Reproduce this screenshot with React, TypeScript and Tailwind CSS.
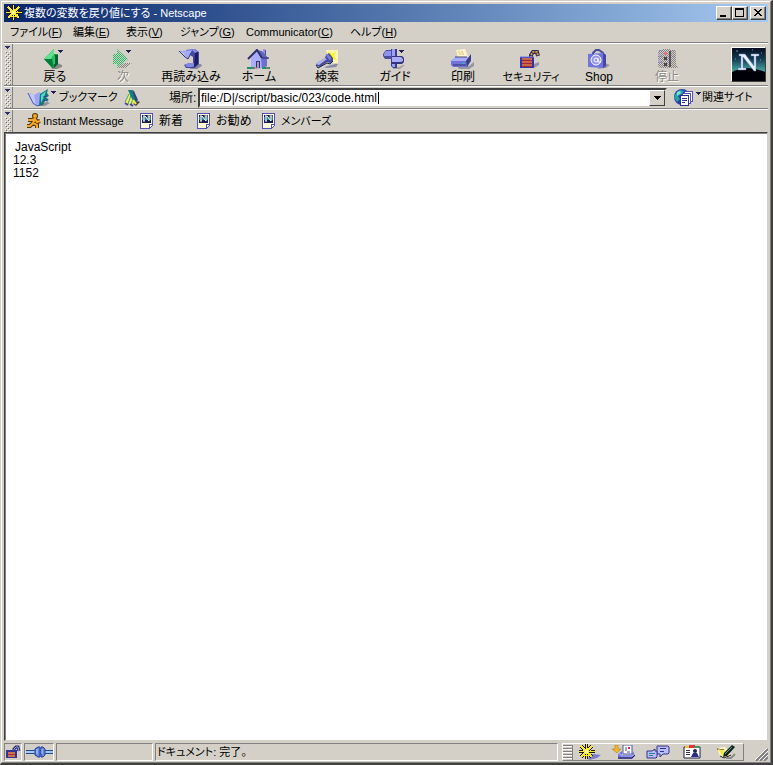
import type { ReactNode } from "react";
import clsx from "clsx";

const sunken = "border border-t-[#808080] border-l-[#808080] border-r-white border-b-white";

function Svg({ w, h, children }: { w: number; h: number; children: ReactNode }) {
  return (
    <svg aria-hidden width={w} height={h} viewBox={`0 0 ${w} ${h}`} className="block shrink-0">
      {children}
    </svg>
  );
}

function Menu3({ x, y }: { x: number; y: number }) {
  return <path d={`M${x} ${y}h5v1h-1v1h-1v1h-1v-1h-1v-1h-1z`} fill="#20204c" shapeRendering="crispEdges" />;
}

/* ── Toolbar icons, 28 × 20 ── */

function BackIcon() {
  return (
    <Svg w={28} h={20}>
      <path d="M10 17l6-3 5 2v2l-5 2h-5z" fill="#8c8a88" />
      <path d="M3 10L13 0v5h4v10l-4 4h-2z" fill="#12a048" />
      <path d="M3 10L13 0v6l-3 4z" fill="#5ee08c" />
      <path d="M3 10h8l1 9z" fill="#087838" />
      <path d="M14 6h3v9l-4 4z" fill="#0a5c38" />
      <path d="M11 7h3v8h-2z" fill="#24c460" />
      <Menu3 x={17} y={1} />
    </Svg>
  );
}

function ForwardIcon() {
  return (
    <Svg w={28} h={20}>
      <defs>
        <pattern id="dither-green" width="2" height="2" patternUnits="userSpaceOnUse">
          <path d="M0 0h1v1H0zM1 1h1v1H1z" fill="#3cac6c" />
          <path d="M1 0h1v1H1z" fill="#b0ecbc" />
        </pattern>
        <pattern id="dither-gray" width="2" height="2" patternUnits="userSpaceOnUse">
          <path d="M0 0h1v1H0zM1 1h1v1H1z" fill="#858382" />
        </pattern>
      </defs>
      <path d="M9 19l6-5h8l-7 5z" fill="url(#dither-gray)" />
      <path d="M4 5h4V0l11 10-11 9v-4H4z" fill="url(#dither-green)" />
      <Menu3 x={17} y={1} />
    </Svg>
  );
}

function ReloadIcon() {
  return (
    <Svg w={28} h={20}>
      <path d="M12 18l3-3h9l1 2-5 3h-7z" fill="#8c8a98" />
      <path d="M9 1l9-1 4 3v12l-4 4h-9l-2-3 5-2h4V8l-3-2-4-3z" fill="#4448a4" />
      <path d="M2 2l13-1-4 9-3-3-2-1 2-1z" fill="#a4a8f4" />
      <path d="M2 2l6 6 3 2 3-6" stroke="#34347c" fill="none" />
      <path d="M9 1l9-1 3 3-3 1-3-3z" fill="#888ce4" />
      <path d="M18 4l3-1v12l-4 3z" fill="#1c1c60" />
      <path d="M8 16l4-2h5v3l-2 1h-5z" fill="#8488e0" />
    </Svg>
  );
}

function HomeIcon() {
  return (
    <Svg w={28} h={20}>
      <path d="M18 1h3v9h-3z" fill="#4c4ca0" />
      <path d="M18 0h2v6h-2z" fill="#9494e0" />
      <path d="M6 9l6-7 5 6v11l-4 1-7-2z" fill="#a8acfc" />
      <path d="M16 8h6v9l-5 3z" fill="#6c70cc" />
      <path d="M12 1l5 1 7 8h-6z" fill="#6064bc" />
      <path d="M3 10l9-9 5 8" stroke="#30306c" strokeWidth="2" fill="none" />
      <path d="M17 9h7" stroke="#30306c" />
      <path d="M11 12h4v7h-4z" fill="#343478" />
      <path d="M12 13h2v6h-2z" fill="#ac98ac" />
      <path d="M2 19h8M17 19h8" stroke="#20906c" strokeWidth="2" />
      <path d="M8 19h4M21 19h3" stroke="#d87048" />
    </Svg>
  );
}

function SearchIcon() {
  return (
    <Svg w={28} h={20}>
      <path d="M13 1h12v13h-8z" fill="#fbf5b8" />
      <path d="M15 2l4 3 4-3-2 5 3 4-4-1-2 3z" fill="#fcf41c" />
      <path d="M11 18l11-3h3l-2 3-9 1z" fill="#8888a8" />
      <path d="M3 15l9-6 1-3 3-2 4 5v4l-3 1-3-1-7 5-3-1z" fill="#484c98" />
      <path d="M3 15l9-6 2 1-8 6z" fill="#b0b4fc" />
      <path d="M13 6l2-1 3 4-1 3z" fill="#7c80dc" />
      <path d="M3 16l2 3 9-5 3 1 3-3" stroke="#1c1c48" fill="none" />
    </Svg>
  );
}

function GuideIcon() {
  return (
    <Svg w={28} h={20}>
      <path d="M12 18h6l4-2h2l-5 4h-7z" fill="#a4a2a0" />
      <path d="M10 0h6v19h-4l-2-2z" fill="#3c3c88" />
      <path d="M11 0h3v18h-2l-1-1z" fill="#9ca0f8" />
      <path d="M2 5l3-4h6v9H4L2 7z" fill="#4c4e9c" />
      <path d="M3 5l2-3h5v5H3z" fill="#9094f0" />
      <path d="M11 7h10l2 2v4l-2 2H11z" fill="#34347c" />
      <path d="M11 8h9l2 2v2l-2 1h-9z" fill="#a8acf8" />
      <Menu3 x={18} y={1} />
    </Svg>
  );
}

function PrintIcon() {
  return (
    <Svg w={28} h={20}>
      <path d="M8 17h12l5-4v4l-5 3H10z" fill="#9896a0" />
      <path d="M2 12l5-4h14l1 4-4 6H4l-2-2z" fill="#7074d4" />
      <path d="M2 12l5-4h13l-3 4z" fill="#a8acfc" />
      <path d="M17 12l5-7v6l-4 7z" fill="#3c3e84" />
      <path d="M7 1l9-1 3 8H9z" fill="#fcf4cc" />
      <path d="M9 3h6M10 5h6" stroke="#d8b878" strokeDasharray="2 1" />
      <path d="M6 8h12" stroke="#44448c" />
      <path d="M4 16h13" stroke="#303078" />
      <path d="M13 14h3v1h-3z" fill="#34b4c8" />
    </Svg>
  );
}

function SecurityIcon() {
  return (
    <Svg w={28} h={20}>
      <path d="M17 15l5-2v3l-5 3z" fill="#9492a8" />
      <path d="M14 9V6l2-3h4l1 4" stroke="#28285c" strokeWidth="4" fill="none" />
      <path d="M14 9V6l2-3h4l1 4" stroke="#d89038" strokeWidth="2" strokeDasharray="2 1" fill="none" />
      <path d="M3 8h14v11H3z" fill="#3434a4" />
      <path d="M5 9h10v9H5z" fill="#a42044" />
      <path d="M5 10h10M5 13h10M5 16h10" stroke="#e8b040" />
      <path d="M3 8h14" stroke="#7474e8" />
    </Svg>
  );
}

function ShopIcon() {
  return (
    <Svg w={28} h={20}>
      <path d="M20 14l5 2-4 3-9 1z" fill="#9896a4" />
      <path d="M8 7V4l3-3h3l4 3v3" stroke="#484c9c" strokeWidth="2" fill="none" />
      <path d="M3 5l16-1 2 2v11l-3 2-15-1z" fill="#7074dc" />
      <path d="M18 4l3 2v11l-3 2z" fill="#4448a0" />
      <circle cx="11" cy="11" r="5" fill="#9498f4" stroke="#fff" />
      <circle cx="11" cy="11" r="2" fill="none" stroke="#fff" />
      <path d="M13 9v4h3" stroke="#fff" fill="none" />
    </Svg>
  );
}

function StopIcon() {
  return (
    <Svg w={28} h={20}>
      <path d="M5 2l2-1h4v18H7l-2-2zM17 1h5l1 2v12l2 4h-8z" fill="url(#dither-gray)" />
      <path d="M5 5h3v2H5zM5 11h3v2H5z" fill="#b0aef0" opacity="0.6" />
      <path d="M10 0h8v19h-8z" fill="url(#dither-gray)" />
      <path d="M16 2h2v16h-2z" fill="#302e38" opacity="0.7" />
      <path d="M11 3h3v3h-3z" fill="#e07880" />
      <path d="M11 8h3v3h-3zM11 14h3v3h-3z" fill="#48464c" />
      <path d="M6 2h3M6 8h3M6 14h3M20 2h2M20 8h2" stroke="#7476d0" strokeDasharray="1 1" />
    </Svg>
  );
}

/* ── Small icons ── */

function WheelIcon({ shadow }: { shadow?: boolean }) {
  return (
    <Svg w={22} h={16}>
      {shadow && <path d="M9 14l5-4 8 1-4 3-8 2z" fill="#7c7cd0" />}
      <g fill="none" shapeRendering="crispEdges">
        <path d="M7 0v15M0 7h16M2 2l11 11M13 2L2 13" stroke="#1c1a18" strokeWidth="3" />
        <path d="M4 4h7v7H4z" stroke="#f8e834" strokeDasharray="2 1" />
        <path d="M7 0v15M0 7h16" stroke="#f8e834" />
        <path d="M2 2l11 11M13 2L2 13" stroke="#f8e834" strokeWidth="2" />
        <path d="M6 6h3v3H6z" fill="#fcf8a0" />
      </g>
    </Svg>
  );
}

function BookmarkIcon() {
  return (
    <Svg w={30} h={18}>
      <path d="M12 15l8-2 3 1-5 3h-7z" fill="#918f98" />
      <path d="M1 4l4 1 2 1 5-3 3 2-2 11-3 1-5-2z" fill="#a0a4f4" />
      <path d="M1 4l6 2 2 11-5-3z" fill="#c4c8ff" />
      <path d="M1 4l5 10 4 3 3-1" stroke="#5054a8" fill="none" />
      <path d="M13 5l8-5-1 4 2 3-3 1 3 3-4 1-2 4-4 1z" fill="#14787c" />
      <path d="M14 6l5-4-2 6-3 6z" fill="#50dcc8" />
      <path d="M16 8l5-1M16 11l5 1" stroke="#2c4c98" />
      <Menu3 x={24} y={2} />
    </Svg>
  );
}

function QuickFileIcon() {
  return (
    <Svg w={18} h={18}>
      <path d="M10 15l5-3 2 1-4 4z" fill="#44444c" />
      <path d="M2 12l5-10 4 9-2 5-6-1z" fill="#f4ec60" />
      <path d="M2 13l4-8M5 15l3-9M8 16l2-7" stroke="#389ca0" />
      <path d="M5 1h4l5 11-2 3-4-7z" fill="#108078" />
      <path d="M9 1l2 1 4 9-2 2z" fill="#2c4484" />
      <path d="M2 14l3 2M7 15l3 2" stroke="#44489c" strokeWidth="2" />
      <path d="M10 11l3 4" stroke="#fcec30" strokeWidth="2" />
    </Svg>
  );
}

function RelatedIcon() {
  return (
    <Svg w={28} h={18}>
      <circle cx="9" cy="8" r="8" fill="#2840b0" />
      <path d="M3 4l4-3 4 1-2 3-4 2 2 3-3 3-3-5z" fill="#28a4a0" />
      <path d="M4 3l3-1 1 2-4 3z" fill="#78e4d8" />
      <g shapeRendering="crispEdges">
        <path d="M11.5 2.5h8v10h-8z" fill="#fff" stroke="#5454b4" />
        <path d="M9.5 4.5h8v10h-8z" fill="#fff" stroke="#5454b4" />
        <path d="M7.5 6.5h8v10h-8z" fill="#fff" stroke="#30308c" />
        <path d="M9 9.5h5M9 11.5h5M9 13.5h3" stroke="#30308c" />
      </g>
      <Menu3 x={23} y={3} />
    </Svg>
  );
}

function RunnerIcon() {
  return (
    <Svg w={14} h={16}>
      <path d="M8 6l-2 4 4 2v3M6 10l-3 3H0M1 7h4l3-1 2 3 3-1" fill="none" stroke="#54380c" strokeWidth="4" />
      <circle cx="8" cy="3" r="3" fill="#54380c" />
      <circle cx="8" cy="3" r="2" fill="#f8a820" />
      <path d="M8 6l-2 4 4 2v3M6 10l-3 3H0M1 7h4l3-1 2 3 3-1" fill="none" stroke="#f8a820" strokeWidth="2" />
    </Svg>
  );
}

function PageIcon() {
  return (
    <Svg w={13} h={16}>
      <g shapeRendering="crispEdges">
        <path d="M0 0h13v12l-4 4H0z" fill="#5050b8" />
        <path d="M1 1h11v10H9v4H1z" fill="#fffbd8" />
        <path d="M10 12h2l-2 2z" fill="#fff" />
        <path d="M2 2h9v8H2z" fill="#16204c" />
        <path d="M2 4h9v3H2z" fill="#3c7c94" />
      </g>
      <path d="M3 3h2l4 5V3M7.500 3h3M4 3v5M3 8h2" stroke="#fff" fill="none" />
    </Svg>
  );
}

function LogoMark() {
  return (
    <Svg w={33} h={33}>
      <defs>
        <linearGradient id="sky" x2="0" y2="1">
          <stop offset="0" stopColor="#060c20" />
          <stop offset="0.35" stopColor="#163e54" />
          <stop offset="0.65" stopColor="#429a98" />
        </linearGradient>
      </defs>
      <path d="M0 0h33v33H0z" fill="url(#sky)" />
      <path d="M0 24q16-8 33 0v9H0z" fill="#000008" />
      <path d="M4 3h2M20 2h1M29 5h1M3 11h1M28 12h1" stroke="#7494b4" />
      <path d="M7 6h6l9 12V8h-3V6h8v2h-3v15h-2L11 9v11h3v2H6v-2h3V8H7z" fill="#e8f0fc" stroke="#6078b8" strokeWidth="0.5" />
    </Svg>
  );
}

function LockSmall() {
  return (
    <Svg w={16} h={14}>
      <path d="M9 7V4l2-2h2l1 4" stroke="#26266c" strokeWidth="3" fill="none" />
      <path d="M9 7V4l2-2h2l1 4" stroke="#9ca0ec" fill="none" />
      <path d="M1 5h11v8H1z" fill="#343494" />
      <path d="M3 7h7v5H3z" fill="#b03040" />
      <path d="M3 8h7M3 11h7" stroke="#e8b448" />
    </Svg>
  );
}

function PlugSmall() {
  return (
    <Svg w={27} h={12}>
      <path d="M0 4.500h27M0 7.500h27" stroke="#28488c" />
      <path d="M0 6h27" stroke="#a4c8f8" strokeWidth="2" />
      <path d="M9 3l3-2h2v10h-2l-3-2zM15 1h2l2 2v6l-2 2h-2z" fill="#6488e0" stroke="#243c94" />
      <path d="M11 3v5M16 3v5" stroke="#b4d0ff" />
    </Svg>
  );
}

function InboxIcon() {
  return (
    <Svg w={24} h={14}>
      <path d="M3 0h3v4h3l-4 4-5-4h3z" fill="#f8b828" stroke="#a06c10" strokeWidth="0.5" />
      <path d="M11 0h9v9h-9z" fill="#fff" stroke="#5454b4" />
      <path d="M16 2h2v2h-2z" fill="#d03040" />
      <path d="M13 3h2M13 5h2M15 7h3" stroke="#4848b0" />
      <path d="M6 9l4-3v4h10l1-4 2 5-3 3H6z" fill="#6c70d0" />
      <path d="M6 9h3v2h11l3-2" stroke="#b0b4fc" fill="none" />
      <path d="M6 13h14l3-3" stroke="#20204c" fill="none" />
    </Svg>
  );
}

function NewsIcon() {
  return (
    <Svg w={24} h={14}>
      <path d="M11 1h11l1 1v6l-1 1h-5l-3 3V9h-3z" fill="#b8bcff" stroke="#34348c" />
      <path d="M14 3.500h6M14 6.500h4" stroke="#34348c" />
      <path d="M1 6h5l3-2v2h2v6l-1 1H1z" fill="#b8bcff" stroke="#34348c" />
      <path d="M3 8.500h6M3 10.500h4" stroke="#288888" />
    </Svg>
  );
}

function AddressIcon() {
  return (
    <Svg w={18} h={14}>
      <path d="M1 2h16v11H1z" fill="#fff" stroke="#1c1c4c" />
      <path d="M2 1h4v2H2z" fill="#e8c838" />
      <path d="M6 0h6v3H6z" fill="#d83838" />
      <path d="M12 1h5v2h-5z" fill="#30a060" />
      <path d="M3 5.500h4M3 7.500h4M3 9.500h4" stroke="#34344c" />
      <circle cx="12" cy="6" r="2" fill="#202060" />
      <path d="M8 12l2-4h4l2 4z" fill="#2c2c88" />
    </Svg>
  );
}

function ComposerIcon() {
  return (
    <Svg w={20} h={14}>
      <path d="M1 3l8-1 4 4 2 4-7 3-4-2z" fill="#fff9c0" />
      <path d="M1 4l7 1M4 11l4 2 7-3" stroke="#202020" fill="none" />
      <path d="M2 4l6 1 3 2-5 4z" fill="#f4e850" />
      <path d="M7 12l1-4 8-8 3 2-8 9z" fill="#14201c" />
      <path d="M9 9l7-7" stroke="#48a890" />
      <path d="M10 13h5l4-4" stroke="#8c8a88" strokeWidth="2" fill="none" />
    </Svg>
  );
}

function Grippy() {
  return (
    <button aria-label="ツールバーを折りたたむ" className="w-2 shrink-0 self-stretch border-r border-[#808080] flex flex-col">
      <svg aria-hidden width="7" height="100%" className="block h-full">
        <defs>
          <pattern id="grip" width="4" height="4" patternUnits="userSpaceOnUse">
            <path d="M1 0h1v1H1zM3 2h1v1H3z" fill="#77746e" />
            <path d="M2 1h1v1H2zM0 3h1v1H0z" fill="#fff" />
          </pattern>
        </defs>
        <rect y="7" width="6" height="100%" fill="url(#grip)" />
        <path d="M0 2h5v1H4v1H3v1H2V4H1V3H0z" fill="#30306c" />
      </svg>
    </button>
  );
}

const menus = [
  { label: "ファイル", key: "F", width: "w-[63px]" },
  { label: "編集", key: "E", width: "w-[53px]" },
  { label: "表示", key: "V", width: "w-[54px]" },
  { label: "ジャンプ", key: "G", width: "w-[66px]" },
  { label: "Communicator", key: "C", width: "w-[104px]" },
  { label: "ヘルプ", key: "H", width: "w-[60px]" },
];

const tools = [
  { label: "戻る", icon: <BackIcon /> },
  { label: "次", icon: <ForwardIcon />, disabled: true },
  { label: "再読み込み", icon: <ReloadIcon /> },
  { label: "ホーム", icon: <HomeIcon /> },
  { label: "検索", icon: <SearchIcon /> },
  { label: "ガイド", icon: <GuideIcon /> },
  { label: "印刷", icon: <PrintIcon /> },
  { label: "セキュリティ", icon: <SecurityIcon /> },
  { label: "Shop", icon: <ShopIcon /> },
  { label: "停止", icon: <StopIcon />, disabled: true },
];

const components = [
  { label: "Navigator", icon: <WheelIcon shadow /> },
  { label: "受信箱", icon: <InboxIcon /> },
  { label: "ニュースグループ", icon: <NewsIcon /> },
  { label: "アドレス帳", icon: <AddressIcon /> },
  { label: "Composer", icon: <ComposerIcon /> },
];

function WindowButton({ label, path }: { label: string; path: string }) {
  return (
    <button
      aria-label={label}
      className="w-4 h-[14px] bg-[#d4d0c8] border border-t-white border-l-white border-r-[#404040] border-b-[#404040] shadow-[inset_-1px_-1px_0_#808080]"
    >
      <svg aria-hidden width="14" height="12" className="block" shapeRendering="crispEdges">
        <path d={path} fill="#000" />
      </svg>
    </button>
  );
}

export default function App() {
  return (
    <div className="min-h-screen flex flex-col bg-[#d4d0c8] border-t border-l border-r-2 border-b-2 border-t-[#d4d0c8] border-l-[#d4d0c8] border-r-[#404040] border-b-[#404040] text-xs text-black font-['Liberation_Sans','Noto_Sans_CJK_JP',sans-serif] [font-feature-settings:'palt']">
      <div className="flex-1 flex flex-col border border-t-white border-l-white border-r-[#808080] border-b-[#808080] px-0.5 pt-0.5 pb-px whitespace-nowrap">
        {/* Title bar */}
        <header className="h-[18px] flex items-center bg-linear-to-r from-[#0a246a] to-[#a6caf0] text-white px-0.5">
          <div className="w-[18px] overflow-hidden">
            <WheelIcon />
          </div>
          <h1 className="flex-1 text-[11px]">複数の変数を戻り値にする - Netscape</h1>
          <WindowButton label="最小化" path="M3 8h6v2H3z" />
          <WindowButton label="最大化" path="M2 1h9v9H2zM3 3v6h7V3z" />
          <div className="w-0.5" />
          <WindowButton label="閉じる" path="M3 2h2v1h1v1h2V3h1V2h2v1h-1v1H9v1H8v1h1v1h1v1h1v1H9V8H8V7H6v1H5v1H3V8h1V7h1V6h1V5H5V4H4V3H3z" />
        </header>

        {/* Menu bar */}
        <nav className="h-[21px] flex items-center pl-1.5 border-b border-[#808080] text-[11px]">
          {menus.map((m) => (
            <button key={m.key} className={clsx("text-left shrink-0", m.width)}>
              {m.label}(<span className="underline">{m.key}</span>)
            </button>
          ))}
        </nav>

        {/* Navigation toolbar */}
        <div className="h-[43px] flex items-center border-t border-b border-t-white border-b-[#808080] pl-px">
          <Grippy />
          <div className="flex ml-2">
            {tools.map((t) => (
              <button
                key={t.label}
                disabled={t.disabled}
                className={clsx(
                  "w-[68px] shrink-0 flex flex-col items-center pt-1",
                  t.disabled && "text-[#8c8984] [text-shadow:1px_1px_0_#fff]",
                  t.label === "セキュリティ" && "text-[11px]"
                )}
              >
                {t.icon}
                <span className="h-4 leading-4">{t.label}</span>
              </button>
            ))}
          </div>
          <div className="flex-1" />
          <a href="#netscape" aria-label="Netscape" className="border border-t-white border-l-white border-r-[#404040] border-b-[#404040] mr-0.5">
            <LogoMark />
          </a>
        </div>

        {/* Location toolbar */}
        <div className="h-[23px] flex items-center border-t border-b border-t-white border-b-[#808080] pl-px">
          <Grippy />
          <button className="flex items-center gap-0.5 ml-[14px] w-[96px] text-[11px]">
            <BookmarkIcon />
            ブックマーク
          </button>
          <button aria-label="クイックファイル">
            <QuickFileIcon />
          </button>
          <label htmlFor="location" className="ml-7 w-[29px]">
            場所:
          </label>
          <div className="relative flex flex-1 h-5 bg-white border-2 border-t-[#404040] border-l-[#404040] border-r-[#d4d0c8] border-b-[#d4d0c8]">
            <input
              id="location"
              defaultValue="file:/D|/script/basic/023/code.html"
              className="flex-1 min-w-0 pl-px outline-none"
            />
            <div className="absolute left-[178px] top-0.5 w-px h-3 bg-black" />
            <button
              aria-label="履歴を表示"
              className="w-4 bg-[#d4d0c8] border border-t-white border-l-white border-r-[#404040] border-b-[#404040] flex items-center justify-center"
            >
              <svg aria-hidden width="7" height="4" shapeRendering="crispEdges">
                <path d="M0 0h7v1H6v1H5v1H4v1H3V3H2V2H1V1H0z" />
              </svg>
            </button>
          </div>
          <button className="flex items-center ml-1.5 w-[95px] text-[11px]">
            <RelatedIcon />
            <span className="ml-px">関連サイト</span>
          </button>
        </div>

        {/* Personal toolbar */}
        <div className="h-[23px] flex items-center border-t border-white pl-px">
          <Grippy />
          <a href="#im" className="flex items-center ml-[14px] w-[113px] text-[11px]">
            <RunnerIcon />
            <span className="ml-0.5">Instant Message</span>
          </a>
          <a href="#new" className="flex items-center gap-1.5 w-[57px]">
            <PageIcon />
            新着
          </a>
          <a href="#recommended" className="flex items-center gap-1.5 w-[65px]">
            <PageIcon />
            お勧め
          </a>
          <a href="#members" className="flex items-center gap-1.5 text-[11px]">
            <PageIcon />
            メンバーズ
          </a>
        </div>

        {/* Document */}
        <main className="flex-1 bg-white border border-t-[#404040] border-l-[#404040] border-r-[#d4d0c8] border-b-[#d4d0c8] shadow-[inset_1px_1px_0_#808080] pl-2 pt-2 leading-[13px]">
          <p className="pl-0.5">JavaScript</p>
          <p>12.3</p>
          <p>1152</p>
        </main>

        {/* Status bar */}
        <footer className="h-5 pt-0.5 flex gap-0.5">
          <button aria-label="セキュリティ情報" className={clsx("w-[18px] flex items-center justify-center", sunken)}>
            <LockSmall />
          </button>
          <div className={clsx("w-[30px] flex items-center justify-center", sunken)}>
            <PlugSmall />
          </div>
          <div className={clsx("w-[97px]", sunken)} />
          <div role="status" className={clsx("flex-1 pl-px leading-4 text-[11px]", sunken)}>
            ドキュメント: 完了。
          </div>
          <div className="ml-0.5 flex items-center border border-t-white border-l-white border-r-[#808080] border-b-[#808080]">
            <div className="w-[10px] h-[15px] border-r border-[#808080] bg-[repeating-linear-gradient(#808080_0_1px,#fff_1px_2px,#d4d0c8_2px_3px)]" />
            {components.map((c) => (
              <button key={c.label} aria-label={c.label} className="w-[34px] flex items-center justify-center">
                {c.icon}
              </button>
            ))}
          </div>
          <div className="w-[22px] flex items-end justify-end">
            <svg aria-hidden width="13" height="13">
              <path d="M1 13L13 1M5 13l8-8M9 13l4-4" stroke="#808080" strokeWidth="2" />
              <path d="M0 12L12 0M4 12l9-9M8 12l5-5" stroke="#fff" />
            </svg>
          </div>
        </footer>
      </div>
    </div>
  );
}
